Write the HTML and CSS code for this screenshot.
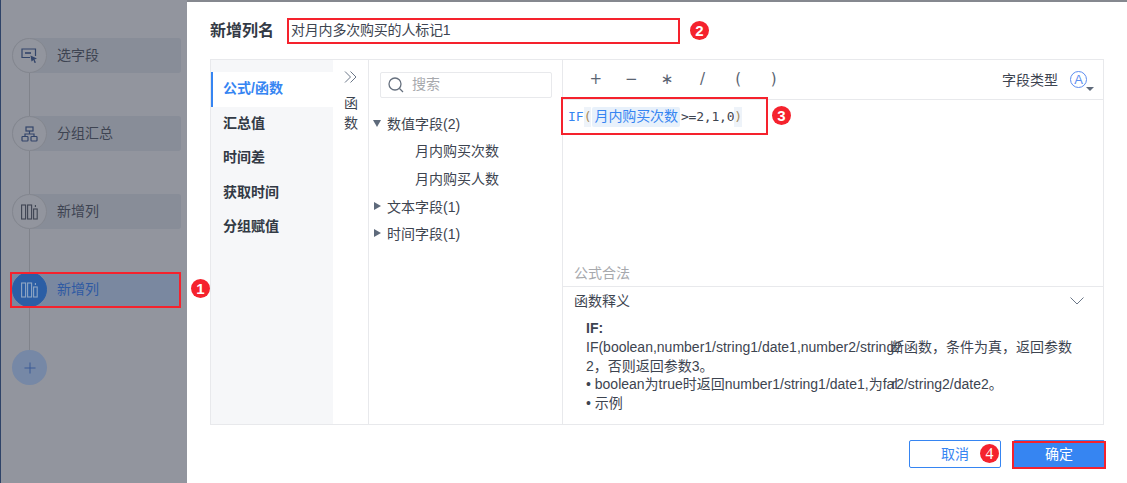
FILE: index.html
```html
<!DOCTYPE html>
<html lang="zh">
<head>
<meta charset="utf-8">
<title>新增列</title>
<link rel="stylesheet" href="styles.css">
</head>
<body>
<div class="page">
  <aside class="sidebar">
    <div class="step">
      <span class="step-icon"><svg width="17" height="17" viewBox="0 0 17 17" fill="none" stroke="#33456a" stroke-width="1.2"><path d="M14.5 9V2H1v8.500h8"/><path d="M4 6h6" stroke-width="1.6"/><path d="M9.500 8.500l6.500 3-2.500 1 1.500 3-1.500.5-1-3-2 1.500z" fill="#33456a" stroke="none"/></svg></span>
      <span class="step-label">选字段</span>
    </div>
    <div class="link"></div>
    <div class="step">
      <span class="step-icon"><svg width="17" height="16" viewBox="0 0 17 16" fill="none" stroke="#33456a" stroke-width="1.200"><rect x="5" y="1" width="7" height="4"/><rect x="1" y="10.500" width="6" height="4.500" rx=".8"/><rect x="10" y="10.500" width="6" height="4.500" rx=".8"/><path d="M8.500 5v3M4 10.500V8h9v2.500"/></svg></span>
      <span class="step-label">分组汇总</span>
    </div>
    <div class="link"></div>
    <div class="step">
      <span class="step-icon"><svg width="17" height="16" viewBox="0 0 17 16" fill="none" stroke="#3e4452" stroke-width="1.100"><rect x=".6" y="1" width="4" height="14"/><rect x="6.600" y="1" width="4" height="14"/><rect x="12.600" y="5" width="3.600" height="10"/><path d="M14.400 1v2"/></svg></span>
      <span class="step-label">新增列</span>
    </div>
    <div class="link"></div>
    <div class="step step-active">
      <span class="step-icon"><svg width="17" height="16" viewBox="0 0 17 16" fill="none" stroke="#8fa6c4" stroke-width="1.100"><rect x=".6" y="1" width="4" height="14"/><rect x="6.600" y="1" width="4" height="14"/><rect x="12.600" y="5" width="3.600" height="10"/><path d="M14.400 1v2"/></svg></span>
      <span class="step-label">新增列</span>
    </div>
    <div class="link"></div>
    <div class="step-add"><svg width="12" height="12" viewBox="0 0 12 12" stroke="#3a5a96" stroke-width="1"><path d="M6 .5v11M.5 6h11"/></svg></div>
  </aside>

  <main class="dialog">
    <header class="name-row">
      <h1 class="name-title">新增列名</h1>
      <div class="name-input">对月内多次购买的人标记1</div>
    </header>

    <section class="panel">
      <nav class="tabs">
        <div class="tab tab-active">公式/函数</div>
        <div class="tab">汇总值</div>
        <div class="tab">时间差</div>
        <div class="tab">获取时间</div>
        <div class="tab">分组赋值</div>
      </nav>

      <div class="fold">
        <svg width="13" height="12" viewBox="0 0 13 12" fill="none" stroke="#6a7687" stroke-width="1"><path d="M1 .5l5.500 5.500L1 11.500M6.500 .5L12 6l-5.500 5.500"/></svg>
        <div class="fold-text">函<br>数</div>
      </div>

      <div class="fields">
        <div class="search">
          <svg width="16" height="16" viewBox="0 0 16 16" fill="none" stroke="#66707e" stroke-width="1.300"><circle cx="7" cy="7" r="6"/><path d="M11.500 11.500L15 15"/></svg>
          <span class="search-text">搜索</span>
        </div>
        <div class="tree">
          <div class="tree-row"><i class="caret-down"></i>数值字段(2)</div>
          <div class="tree-row tree-child">月内购买次数</div>
          <div class="tree-row tree-child">月内购买人数</div>
          <div class="tree-row"><i class="caret-right"></i>文本字段(1)</div>
          <div class="tree-row"><i class="caret-right"></i>时间字段(1)</div>
        </div>
      </div>

      <div class="editor">
        <div class="toolbar">
          <div class="ops"><span>+</span><span>−</span><span>∗</span><span>/</span><span>(</span><span>)</span></div>
          <span class="type-label">字段类型</span>
          <span class="type-icon">A</span>
          <i class="type-caret"></i>
        </div>
        <div class="code">
          <span class="kw">IF</span><span class="paren">(</span><span class="token">月内购买次数</span><span class="rest">&gt;=2,1,0</span><span class="paren">)</span>
        </div>
        <div class="status">公式合法</div>
        <div class="doc">
          <div class="doc-head"><span class="doc-title">函数释义</span>
            <svg width="14" height="8" viewBox="0 0 14 8" fill="none" stroke="#6a7687" stroke-width="1"><path d="M.5 .5L7 7l6.500-6.500"/></svg>
          </div>
          <div class="doc-body">
            <div class="doc-strong">IF:</div>
            <div>IF(boolean,number1/string1/date1,number2/string2<span class="overlap">断函数，条件为真，返回参数</span></div>
            <div>2，否则返回参数3。</div>
            <div>• boolean为true时返回number1/string1/date1,为fal<span class="overlap2">r2/string2/date2。</span></div>
            <div>• 示例</div>
          </div>
        </div>
      </div>
    </section>

    <footer class="actions">
      <button class="btn btn-cancel"><span class="btn-text">取消</span></button>
      <button class="btn btn-ok"><span class="btn-text">确定</span></button>
    </footer>
  </main>

  <div class="mark mark-1"></div>
  <div class="mark mark-2"></div>
  <div class="mark mark-3"></div>
  <div class="mark mark-4"></div>
  <span class="badge badge-1">1</span>
  <span class="badge badge-2">2</span>
  <span class="badge badge-3">3</span>
  <span class="badge badge-4">4</span>
</div>
</body>
</html>
```
FILE: styles.css
```css
* { box-sizing: border-box; }
html, body { margin: 0; height: 100%; background: #fff; overflow: hidden; }
body {
  font-family: "Liberation Sans", "Noto Sans CJK SC", sans-serif;
  font-size: 14px;
  color: #3d4450;
}
.page {
  position: relative;
  display: flex;
  width: 1127px;
  height: 483px;
  border-top: 2px solid #85888f;
}

/* sidebar */
.sidebar {
  width: 187px;
  flex: none;
  background: #92959e;
  border-left: 1px solid #2f4368;
  padding: 38px 0 0 11px;
  margin-top: -2px;
}
.step {
  display: flex;
  align-items: center;
  width: 169px;
  height: 35px;
  background: #888d98;
  border-radius: 18px 3px 3px 18px;
}
.step-icon {
  display: flex;
  align-items: center;
  justify-content: center;
  width: 35px;
  height: 35px;
  border-radius: 50%;
  border: 1px solid #84878f;
  background: #92959e;
  margin-right: 10px;
}
.step-label { font-size: 14px; color: #3e4452; line-height: 34px; height: 35px; }
.step-active { background: #7a88a0; border-radius: 0; }
.step-active .step-icon { background: #2b5ea5; border-color: #2b5ea5; }
.step-active .step-label { color: #2f5aa3; }
.link { width: 1px; height: 43px; margin-left: 17px; background: #80838b; }
.step-add {
  display: flex;
  align-items: center;
  justify-content: center;
  width: 35px;
  height: 35px;
  border-radius: 50%;
  background: #7688a6;
}

/* dialog */
.dialog {
  flex: 1;
  min-width: 0;
  display: flex;
  flex-direction: column;
  padding: 0 23px;
}
.name-row {
  display: flex;
  align-items: center;
  height: 57px;
}
.name-title {
  margin: 0;
  width: 77px;
  font-size: 16px;
  font-weight: bold;
  color: #333a45;
  line-height: 22px;
}
.name-input {
  width: 393px;
  height: 25px;
  padding-left: 4px;
  line-height: 25px;
  letter-spacing: -.2px;
  color: #3d4450;
}
.panel {
  display: flex;
  width: 894px;
  height: 366px;
  border: 1px solid #e8e9ec;
}
.tabs {
  width: 122px;
  flex: none;
  background: #f6f7f9;
  padding-top: 12px;
}
.tab {
  height: 34.500px;
  line-height: 32px;
  padding-left: 12px;
  font-weight: bold;
  color: #333a45;
}
.tab-active {
  background: #fff;
  color: #3685f2;
  border-left: 2px solid #3685f2;
  padding-left: 10px;
}
.fold {
  width: 36px;
  flex: none;
  border-right: 1px solid #e8e9ec;
  padding: 11px 0 0 11px;
}
.fold svg { display: block; }
.fold-text { margin-top: 10px; line-height: 20px; color: #3d4450; }
.fields {
  width: 194px;
  flex: none;
  border-right: 1px solid #e8e9ec;
  padding: 12px 0 0 4px;
}
.search {
  display: flex;
  align-items: center;
  gap: 8px;
  width: 172px;
  height: 26px;
  margin-left: 7px;
  padding-left: 7px;
  border: 1px solid #e8e9ec;
  border-radius: 2px;
  color: #a7a9ad;
}
.search-text { line-height: 20px; height: 22px; }
.tree { margin-top: 11px; }
.tree-row {
  display: flex;
  align-items: center;
  height: 27.600px;
  color: #3d4450;
  padding-left: 14px;
  position: relative;
}
.tree-child { padding-left: 42px; }
.caret-down, .caret-right { position: absolute; width: 0; height: 0; }
.caret-down {
  left: 0;
  top: 11px;
  border-left: 4.500px solid transparent;
  border-right: 4.500px solid transparent;
  border-top: 7px solid #5e6a7b;
}
.caret-right {
  left: 1px;
  top: 10px;
  border-top: 4.500px solid transparent;
  border-bottom: 4.500px solid transparent;
  border-left: 7px solid #5e6a7b;
}
.editor {
  flex: 1;
  min-width: 0;
  display: flex;
  flex-direction: column;
}
.toolbar {
  display: flex;
  align-items: center;
  height: 40px;
  flex: none;
  border-bottom: 1px solid #e8e9ec;
  padding: 0 9px 0 15px;
  position: relative;
}
.ops { display: flex; flex: 1; margin-top: -1px; }
.ops span {
  width: 35.600px;
  text-align: center;
  font-family: "DejaVu Sans", sans-serif;
  font-size: 15px;
  line-height: 24px;
  color: #5a6472;
}
.type-label { color: #3d4450; margin: -2px 12px 0 0; }
.type-icon {
  width: 17px;
  height: 17px;
  border: 1.300px solid #5c8df0;
  border-radius: 50%;
  margin: -1px 7px 0 0;
  color: #5c8df0;
  font-size: 13px;
  line-height: 15px;
  text-align: center;
}
.type-caret {
  position: absolute;
  right: 9px;
  top: 27px;
  width: 0;
  height: 0;
  border-left: 4px solid transparent;
  border-right: 4px solid transparent;
  border-top: 4px solid #5e6a7b;
}
.code {
  flex: 1;
  display: flex;
  align-items: flex-start;
  padding: 7px 0 0 5px;
  font-family: "DejaVu Sans Mono", monospace;
  font-size: 13px;
  line-height: 20px;
}
.kw { color: #3685f2; }
.paren { color: #a68b5b; background: #eef3f9; }
.token {
  margin: 0 1px;
  padding: 0 2px;
  height: 20px;
  background: #e8f1fb;
  border-radius: 2px;
  color: #3685f2;
  font-family: "Liberation Sans", "Noto Sans CJK SC", sans-serif;
  font-size: 14px;
  line-height: 19px;
  letter-spacing: -.1px;
}
.rest { color: #3d4450; letter-spacing: -.2px; }
.status {
  height: 25px;
  flex: none;
  padding-left: 11px;
  line-height: 22px;
  color: #a7a9ad;
  border-bottom: 1px solid #e8e9ec;
}
.doc { height: 137px; flex: none; }
.doc-head {
  display: flex;
  align-items: center;
  justify-content: space-between;
  height: 28px;
  padding: 0 19px 0 11px;
}
.doc-title { line-height: 22px; height: 23px; }
.doc-body {
  padding: 4px 0 0 23px;
  line-height: 18.800px;
  width: 512px;
  white-space: nowrap;
}
.doc-strong { font-weight: bold; }
.overlap { margin-left: -12px; }
.overlap2 { margin-left: -6px; }

/* footer */
.actions {
  display: flex;
  justify-content: flex-end;
  gap: 12px;
  padding-top: 15px;
  width: 895px;
}
.btn {
  width: 92px;
  height: 28px;
  border-radius: 2px;
  font: inherit;
  padding: 0;
}
.btn-text { position: relative; top: -1px; }
.btn-cancel { background: #fff; border: 1px solid #3685f2; color: #3685f2; }
.btn-ok { background: #3685f2; border: 1px solid #3685f2; color: #fff; }

/* annotations drawn over the screenshot */
.mark { position: absolute; border: 2px solid #f5222d; pointer-events: none; }
.mark-1 { left: 10px; top: 270px; width: 171px; height: 36px; }
.mark-2 { left: 287px; top: 16px; width: 393px; height: 26px; }
.mark-3 { left: 561px; top: 95px; width: 207px; height: 38px; }
.mark-4 { left: 1012px; top: 439px; width: 94px; height: 28px; }
.badge {
  position: absolute;
  width: 19px;
  height: 19px;
  border-radius: 50%;
  background: #f5222d;
  color: #fff;
  font-size: 15px;
  font-weight: bold;
  line-height: 19px;
  text-align: center;
}
.badge-1 { left: 191px; top: 277px; }
.badge-2 { left: 690px; top: 19px; }
.badge-3 { left: 772px; top: 104px; }
.badge-4 { left: 980px; top: 442px; font-family: "Liberation Serif", serif; font-size: 16px; font-weight: normal; }
```
